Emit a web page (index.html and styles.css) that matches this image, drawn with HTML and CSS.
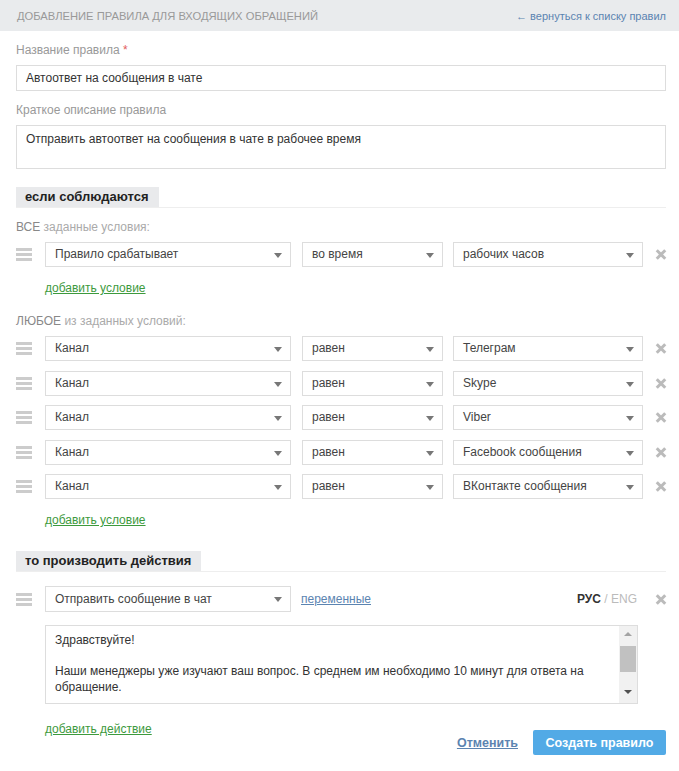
FILE: index.html
```html
<!DOCTYPE html>
<html lang="ru">
  <head>
    <meta charset="UTF-8" />
    <meta name="viewport" content="width=device-width, initial-scale=1.0" />
    <title>Добавление правила</title>
    <link rel="stylesheet" href="styles.css">
  </head>
  <body>
    <div class="header">
      <span class="header-title">Добавление правила для входящих обращений</span>
      <a class="back-link" href="#">&larr; вернуться к списку правил</a>
    </div>

    <div class="content">
      <div class="field-label">Название правила <span class="req">*</span></div>
      <div class="text-input">Автоответ на сообщения в чате</div>

      <div class="field-label">Краткое описание правила</div>
      <div class="text-area">Отправить автоответ на сообщения в чате в рабочее время</div>

      <!-- Conditions -->
      <div class="section-head">
        <span class="section-tab">если соблюдаются</span>
      </div>

      <div class="group-label"><b>ВСЕ</b> заданные условия:</div>
      <div class="rows">
        <div class="cond-row">
          <span class="handle"><i></i><i></i><i></i></span>
          <div class="select w-field">Правило срабатывает</div>
          <div class="select w-op">во время</div>
          <div class="select w-val">рабочих часов</div>
          <span class="remove"></span>
        </div>
      </div>
      <a class="add-link" href="#">добавить условие</a>

      <div class="group-label any"><b>ЛЮБОЕ</b> из заданных условий:</div>
      <div class="rows">
        <div class="cond-row">
          <span class="handle"><i></i><i></i><i></i></span>
          <div class="select w-field">Канал</div>
          <div class="select w-op">равен</div>
          <div class="select w-val">Телеграм</div>
          <span class="remove"></span>
        </div>
        <div class="cond-row">
          <span class="handle"><i></i><i></i><i></i></span>
          <div class="select w-field">Канал</div>
          <div class="select w-op">равен</div>
          <div class="select w-val">Skype</div>
          <span class="remove"></span>
        </div>
        <div class="cond-row">
          <span class="handle"><i></i><i></i><i></i></span>
          <div class="select w-field">Канал</div>
          <div class="select w-op">равен</div>
          <div class="select w-val">Viber</div>
          <span class="remove"></span>
        </div>
        <div class="cond-row">
          <span class="handle"><i></i><i></i><i></i></span>
          <div class="select w-field">Канал</div>
          <div class="select w-op">равен</div>
          <div class="select w-val">Facebook сообщения</div>
          <span class="remove"></span>
        </div>
        <div class="cond-row">
          <span class="handle"><i></i><i></i><i></i></span>
          <div class="select w-field">Канал</div>
          <div class="select w-op">равен</div>
          <div class="select w-val">ВКонтакте сообщения</div>
          <span class="remove"></span>
        </div>
      </div>
      <a class="add-link" href="#">добавить условие</a>

      <!-- Actions -->
      <div class="section-head actions">
        <span class="section-tab">то производить действия</span>
      </div>

      <div class="cond-row action-row">
        <span class="handle"><i></i><i></i><i></i></span>
        <div class="select w-field action-select">Отправить сообщение в чат</div>
        <a class="vars-link" href="#">переменные</a>
        <span class="lang"><b>РУС</b> / ENG</span>
        <span class="remove"></span>
      </div>

      <div class="message">
        <div class="message-text">
          <p>Здравствуйте!</p>
          <p>Наши менеджеры уже изучают ваш вопрос. В среднем им необходимо 10 минут для ответа на обращение.</p>
        </div>
        <div class="scrollbar">
          <span class="sb-up"></span>
          <span class="sb-thumb"></span>
          <span class="sb-down"></span>
        </div>
      </div>

      <div class="footer">
        <a class="add-link" href="#">добавить действие</a>
        <div class="buttons">
          <a class="cancel" href="#">Отменить</a>
          <button class="create">Создать правило</button>
        </div>
      </div>
    </div>
  </body>
</html>
```

FILE: styles.css
```css
body {
  margin: 0;
  font-family: "Liberation Sans", Arial, sans-serif;
  font-size: 12px;
  color: #333;
  background: #fff;
}

a {
  text-decoration: underline;
}

.header {
  height: 31px;
  background: #e9ebed;
  display: flex;
  align-items: center;
  justify-content: space-between;
  padding: 0 13px 0 17px;
}

.header-title {
  font-size: 11.2px;
  text-transform: uppercase;
  color: #999;
}

.back-link {
  font-size: 11px;
  color: #5b84b1;
  text-decoration: none;
}

.content {
  padding: 0 13px 0 16px;
}

.field-label {
  line-height: 16px;
  margin-top: 11px;
  color: #999;
}

.req {
  color: #e25c5c;
}

.text-input,
.text-area {
  margin-top: 7px;
  border: 1px solid #ddd;
  box-sizing: border-box;
  padding: 0 9px;
  color: #333;
}

.text-input {
  height: 26px;
  line-height: 24px;
}

.text-area {
  height: 44px;
  padding-top: 5px;
  line-height: 16px;
}

/* section tabs */
.section-head {
  margin-top: 18px;
  border-bottom: 1px solid #eee;
  display: flex;
}

.section-head.actions {
  margin-top: 23px;
}

.section-tab {
  height: 20px;
  line-height: 20px;
  padding: 0 10px 0 9px;
  background: #e9eaec;
  font-size: 13px;
  font-weight: bold;
  color: #222;
}

.group-label {
  margin-top: 11px;
  line-height: 16px;
  color: #aaa;
}

.group-label b {
  font-weight: normal;
  color: #888;
}

.group-label.any {
  margin-top: 17px;
}

.rows {
  margin-top: 7px;
  display: flex;
  flex-direction: column;
  gap: 9.5px;
}

.cond-row {
  display: flex;
  align-items: center;
  height: 25px;
}

.handle {
  width: 16px;
  margin-right: 13px;
  display: flex;
  flex-direction: column;
  gap: 2px;
}

.handle i {
  display: block;
  height: 3px;
  background: #ccc;
}

.select {
  position: relative;
  height: 25px;
  line-height: 23px;
  box-sizing: border-box;
  border: 1px solid #ddd;
  padding-left: 9px;
  color: #444;
}

.select::after {
  content: "";
  position: absolute;
  right: 8px;
  top: 10px;
  border-left: 4px solid transparent;
  border-right: 4px solid transparent;
  border-top: 5px solid #777;
}

.w-field {
  width: 246px;
}

.w-op {
  width: 141px;
  margin-left: 11px;
}

.w-val {
  width: 190px;
  margin-left: 10px;
}

.remove {
  margin-left: auto;
  width: 10px;
  height: 10px;
  position: relative;
}

.remove::before,
.remove::after {
  content: "";
  position: absolute;
  left: -1px;
  top: 3.5px;
  width: 12px;
  height: 3px;
  background: #bbb;
  transform: rotate(45deg);
}

.remove::after {
  transform: rotate(-45deg);
}

.add-link {
  display: inline-block;
  margin: 13px 0 0 29px;
  line-height: 16px;
  color: #3d9a3d;
}

/* action row */
.action-row {
  margin-top: 14px;
  height: 26px;
}

.action-select {
  height: 26px;
  line-height: 24px;
}

.vars-link {
  margin-left: 10px;
  color: #5b84b1;
}

.lang {
  margin-left: auto;
  color: #bbb;
}

.lang b {
  color: #333;
}

.action-row .remove {
  margin-left: 19px;
}

.message {
  margin: 13px 0 0 29px;
  width: 593px;
  height: 79px;
  box-sizing: border-box;
  border: 1px solid #ddd;
  display: flex;
}

.message-text {
  flex: 1;
  padding: 6px 9px;
  line-height: 16px;
  color: #333;
}

.message-text p {
  margin: 0 0 15px;
}

.scrollbar {
  width: 18px;
  background: #f1f1f1;
  display: flex;
  flex-direction: column;
  align-items: center;
}

.sb-up,
.sb-down {
  width: 0;
  height: 0;
  border-left: 4px solid transparent;
  border-right: 4px solid transparent;
}

.sb-up {
  margin-top: 6px;
  border-bottom: 4px solid #a3a3a3;
}

.sb-thumb {
  margin-top: 10px;
  width: 16px;
  height: 26px;
  background: #c1c1c1;
}

.sb-down {
  margin-top: auto;
  margin-bottom: 9px;
  border-top: 4px solid #505050;
}

.footer {
  display: flex;
  justify-content: space-between;
  align-items: flex-start;
}

.footer .add-link {
  margin-top: 17px;
}

.buttons {
  margin-top: 26px;
  display: flex;
  align-items: center;
  gap: 15px;
}

.cancel {
  font-size: 12.5px;
  font-weight: bold;
  color: #5b84b1;
}

.create {
  width: 133px;
  height: 25px;
  border: none;
  border-radius: 2px;
  background: #52aae6;
  color: #fff;
  font-family: inherit;
  font-size: 12.5px;
  font-weight: bold;
  cursor: pointer;
}
```
